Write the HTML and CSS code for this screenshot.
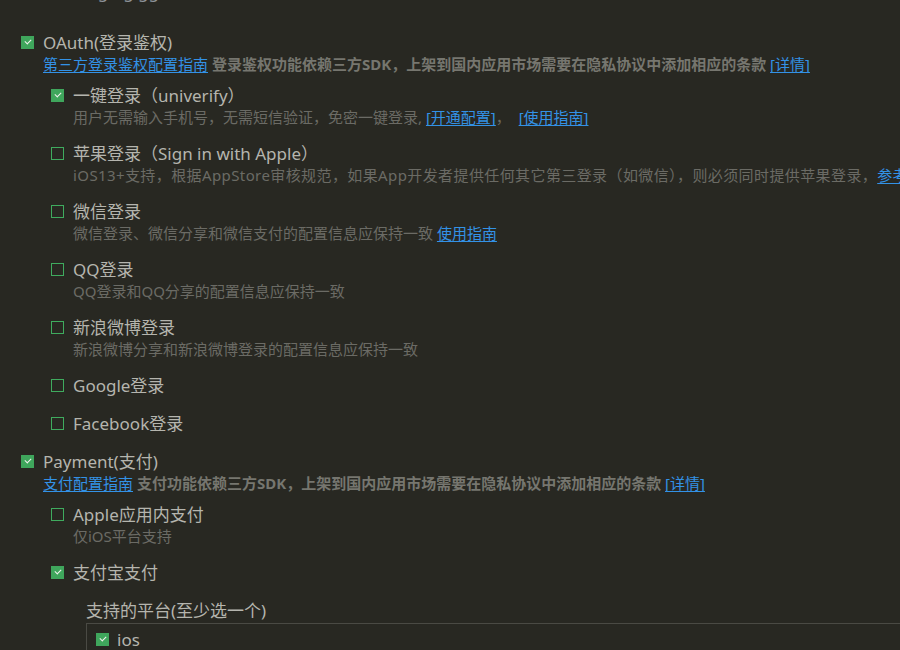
FILE: index.html
```html
<!DOCTYPE html>
<html lang="zh">
<head>
<meta charset="utf-8">
<link rel="stylesheet" href="styles.css">
</head>
<body>
<div class="page">
  <div class="prev">Messaging gg</div>

  <div class="group">
    <div class="row top"><span class="cb on"></span><span class="title">OAuth(登录鉴权)</span></div>
    <div class="guide"><a class="link">第三方登录鉴权配置指南</a> <b>登录鉴权功能依赖三方SDK，上架到国内应用市场需要在隐私协议中添加相应的条款</b> <a class="link">[详情]</a></div>
    <div class="subs">
      <div class="item">
        <div class="row"><span class="cb on"></span><span class="title">一键登录（univerify）</span></div>
        <div class="desc">用户无需输入手机号，无需短信验证，免密一键登录, <a class="link">[开通配置]</a>，&nbsp; <a class="link">[使用指南]</a></div>
      </div>
      <div class="item">
        <div class="row"><span class="cb"></span><span class="title">苹果登录（Sign in with Apple）</span></div>
        <div class="desc wide">iOS13+支持，根据AppStore审核规范，如果App开发者提供任何其它第三登录（如微信），则必须同时提供苹果登录，<a class="link">参考</a></div>
      </div>
      <div class="item">
        <div class="row"><span class="cb"></span><span class="title">微信登录</span></div>
        <div class="desc">微信登录、微信分享和微信支付的配置信息应保持一致 <a class="link">使用指南</a></div>
      </div>
      <div class="item">
        <div class="row"><span class="cb"></span><span class="title">QQ登录</span></div>
        <div class="desc">QQ登录和QQ分享的配置信息应保持一致</div>
      </div>
      <div class="item">
        <div class="row"><span class="cb"></span><span class="title">新浪微博登录</span></div>
        <div class="desc">新浪微博分享和新浪微博登录的配置信息应保持一致</div>
      </div>
      <div class="item">
        <div class="row"><span class="cb"></span><span class="title">Google登录</span></div>
      </div>
      <div class="item">
        <div class="row"><span class="cb"></span><span class="title">Facebook登录</span></div>
      </div>
    </div>
  </div>

  <div class="group">
    <div class="row top"><span class="cb on"></span><span class="title">Payment(支付)</span></div>
    <div class="guide"><a class="link">支付配置指南</a> <b>支付功能依赖三方SDK，上架到国内应用市场需要在隐私协议中添加相应的条款</b> <a class="link">[详情]</a></div>
    <div class="subs">
      <div class="item">
        <div class="row"><span class="cb"></span><span class="title">Apple应用内支付</span></div>
        <div class="desc">仅iOS平台支持</div>
      </div>
      <div class="item">
        <div class="row"><span class="cb on"></span><span class="title">支付宝支付</span></div>
        <div class="platforms">
          <div class="plabel">支持的平台(至少选一个)</div>
          <div class="pbox">
            <div class="row"><span class="cb on"></span><span class="title">ios</span></div>
          </div>
        </div>
      </div>
    </div>
  </div>
</div>
</body>
</html>
```

FILE: styles.css
```css
html, body {
  margin: 0;
  padding: 0;
  background: #282822;
  overflow: hidden;
  width: 900px;
  height: 650px;
}
.page {
  padding-left: 21px;
  font-family: "Noto Sans", "Noto Sans CJK SC", sans-serif;
  white-space: nowrap;
}
.prev {
  margin-top: -19px;
  margin-left: 26px;
  height: 22px;
  line-height: 22px;
  font-size: 17px;
  color: #8f949a;
  margin-bottom: 29px;
}
.group {
  margin-bottom: 16px;
}
.row {
  display: flex;
  align-items: flex-start;
  height: 22px;
}
.cb {
  flex: none;
  width: 13px;
  height: 13px;
  box-sizing: border-box;
  border: 1px solid #3fab5e;
  margin-right: 9px;
  margin-top: 4px;
  position: relative;
}
.cb.on {
  background: #3fa65c;
  border-color: #3fa65c;
}
.cb.on::after {
  content: "";
  position: absolute;
  left: 3px;
  top: 2px;
  width: 5px;
  height: 3px;
  border-left: 1.6px solid #f2f2ee;
  border-bottom: 1.6px solid #f2f2ee;
  transform: rotate(-45deg);
}
.title {
  font-size: 17px;
  color: #b5b5ae;
  line-height: 22px;
}
.guide, .desc {
  font-size: 15px;
  line-height: 20px;
  margin-left: 22px;
}
.guide b {
  color: #76766f;
  font-weight: bold;
}
.desc {
  color: #6b6b65;
}
.desc.wide {
  letter-spacing: 0.4px;
}
.link {
  color: #3392e6;
  text-decoration: underline;
  text-underline-offset: 2px;
}
.subs {
  margin-left: 30px;
  margin-top: 11px;
}
.item {
  margin-bottom: 16px;
}
.platforms {
  margin-top: 16px;
  margin-left: 35px;
}
.plabel {
  font-size: 17px;
  line-height: 22px;
  color: #b5b5ae;
  margin-bottom: 1px;
}
.pbox {
  border-top: 1px solid #4a4a44;
  border-left: 1px solid #4a4a44;
  padding: 9px 0 10px 9px;
}
.pbox .row {
  height: 14px;
}
.pbox .title {
  line-height: 14px;
}
.pbox .cb {
  margin-right: 8px;
  margin-top: 0;
}
```
